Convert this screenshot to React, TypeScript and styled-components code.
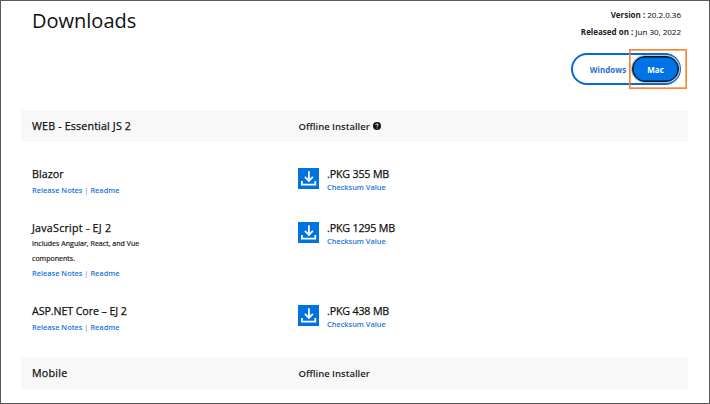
import React from "react";
import styled, { createGlobalStyle } from "styled-components";

const GlobalStyle = createGlobalStyle`
  * { box-sizing: border-box; }
  body { margin: 0; background: #fff; font-family: "Open Sans", "Noto Sans", sans-serif; color: #111; }
`;

const Page = styled.main`
  width: 710px;
  height: 404px;
  border: 1px solid #58585a;
  background: #fff;
  overflow: hidden;
`;

const Header = styled.header`
  display: flex;
  justify-content: space-between;
  height: 109px;
  padding: 6px 28px 0 31px;
`;

const Heading = styled.h1`
  margin: 0;
  font-size: 20px;
  line-height: 27px;
  font-weight: 400;
`;

const Aside = styled.div`
  display: flex;
  flex-direction: column;
  align-items: flex-end;
`;

const Meta = styled.div`
  position: relative;
  top: -1px;
  font-size: 8px;
  line-height: 17px;
  color: #222;
  white-space: nowrap;
  -webkit-text-stroke: 0.1px currentColor;
  b { font-weight: 700; -webkit-text-stroke: 0; }
`;

const Toggle = styled.div`
  display: flex;
  align-items: center;
  width: 110px;
  height: 32px;
  margin-top: 12px;
  border: 2px solid #0469d8;
  border-radius: 16px;
`;

const Choice = styled.button<{ $active?: boolean }>`
  position: relative;
  width: ${(p) => (p.$active ? "47px" : "59px")};
  height: 26px;
  padding: ${(p) => (p.$active ? "0" : "0 0 0 11px")};
  border: ${(p) => (p.$active ? "1px solid #101318" : "0")};
  border-radius: 13px;
  background: ${(p) => (p.$active ? "#0073e6" : "transparent")};
  box-shadow: ${(p) => (p.$active ? "0 0 0 1px #b9c6d6, inset 0 0 0 0.5px #101318" : "none")};
  color: ${(p) => (p.$active ? "#fff" : "#2a70d0")};
  font: 700 8px "Open Sans", sans-serif;
`;

const Highlight = styled.span`
  position: absolute;
  left: -4px;
  top: -8px;
  width: 58px;
  height: 40px;
  border: 1px solid #fb8433;
  box-shadow: inset 0 0 0 1px rgba(251, 113, 16, 0.6);
`;

const Band = styled.section`
  display: grid;
  grid-template-columns: 266.5px 1fr;
  align-items: center;
  height: 32px;
  margin: 0 21px 0 20px;
  padding-left: 11px;
  background: #f8f8f8;
`;

const Name = styled.h3<{ $tracking?: number }>`
  margin: 0;
  font-size: 10.7px;
  line-height: 16px;
  font-weight: 400;
  letter-spacing: ${(p) => p.$tracking ?? 0}px;
  -webkit-text-stroke: 0.25px currentColor;
`;

const BandTitle = styled(Name).attrs({ as: "h2" })``;

const BandLabel = styled.div`
  display: flex;
  align-items: center;
  gap: 3px;
  font-size: 9.5px;
  font-weight: 600;
  color: #222;
`;

const Row = styled.article<{ $height: number }>`
  display: grid;
  grid-template-columns: 266px 1fr;
  height: ${(p) => p.$height}px;
  padding: 24px 0 0 31px;
`;

const Note = styled.p`
  width: 125px;
  margin: 0;
  padding-top: 1px;
  margin-bottom: -1px;
  font-size: 7px;
  line-height: 14.5px;
  letter-spacing: 0.03px;
  color: #222;
  -webkit-text-stroke: 0.2px currentColor;
`;

const Links = styled.div<{ $compact?: boolean }>`
  margin-top: ${(p) => (p.$compact ? "-3px" : "0")};
  font-size: 7.4px;
  line-height: 16px;
  font-weight: 600;
  color: #999;
  white-space: nowrap;
`;

const Link = styled.a`
  color: #2176d9;
`;

const Installer = styled.div`
  display: flex;
  align-items: flex-start;
  gap: 8px;
`;

const IconTile = styled.div`
  width: 21px;
  height: 21px;
  margin-top: 2px;
  background: #0073e0;
  svg { display: block; }
`;

const DownloadIcon = () => (
  <IconTile>
    <svg width="21" height="21" viewBox="0 0 21 21" fill="none" stroke="#fff" strokeWidth="1.8">
      <path d="M10.9 3.2v9.4M6.9 8.9l4 4 4-4" />
      <path d="M3.9 13v3.6h13.4V13" />
    </svg>
  </IconTile>
);

const HelpIcon = () => (
  <svg width="8" height="8" viewBox="0 0 8 8">
    <circle cx="4" cy="4" r="4" fill="#111" />
    <path d="M2.8 3.1c0-1.6 2.5-1.5 2.5-.1 0 .8-1.2.8-1.2 1.7M4.1 5.6v.9" fill="none" stroke="#fff" strokeWidth="1" />
  </svg>
);

type Product = { name: string; tracking: number; note?: string; size: string; height: number };

const products: Product[] = [
  { name: "Blazor", tracking: 0.05, size: ".PKG 355 MB", height: 54 },
  { name: "JavaScript - EJ 2", tracking: 0.24, note: "Includes Angular, React, and Vue components.", size: ".PKG 1295 MB", height: 83 },
  { name: "ASP.NET Core – EJ 2", tracking: -0.1, size: ".PKG 438 MB", height: 78 },
];

export default function App() {
  return (
    <>
      <GlobalStyle />
      <Page>
        <Header>
          <Heading>Downloads</Heading>
          <Aside>
            <Meta><b>Version :</b> 20.2.0.36</Meta>
            <Meta><b>Released on :</b> Jun 30, 2022</Meta>
            <Toggle>
              <Choice>Windows</Choice>
              <Choice $active>Mac<Highlight /></Choice>
            </Toggle>
          </Aside>
        </Header>
        <Band>
          <BandTitle $tracking={0.16}>WEB - Essential JS 2</BandTitle>
          <BandLabel>Offline Installer <HelpIcon /></BandLabel>
        </Band>
        {products.map((p) => (
          <Row key={p.name} $height={p.height}>
            <div>
              <Name $tracking={p.tracking}>{p.name}</Name>
              {p.note && <Note>{p.note}</Note>}
              <Links><Link>Release Notes</Link> | <Link>Readme</Link></Links>
            </div>
            <Installer>
              <DownloadIcon />
              <div>
                <Name $tracking={-0.17}>{p.size}</Name>
                <Links $compact><Link>Checksum Value</Link></Links>
              </div>
            </Installer>
          </Row>
        ))}
        <Band>
          <BandTitle $tracking={0.25}>Mobile</BandTitle>
          <BandLabel>Offline Installer</BandLabel>
        </Band>
      </Page>
    </>
  );
}
